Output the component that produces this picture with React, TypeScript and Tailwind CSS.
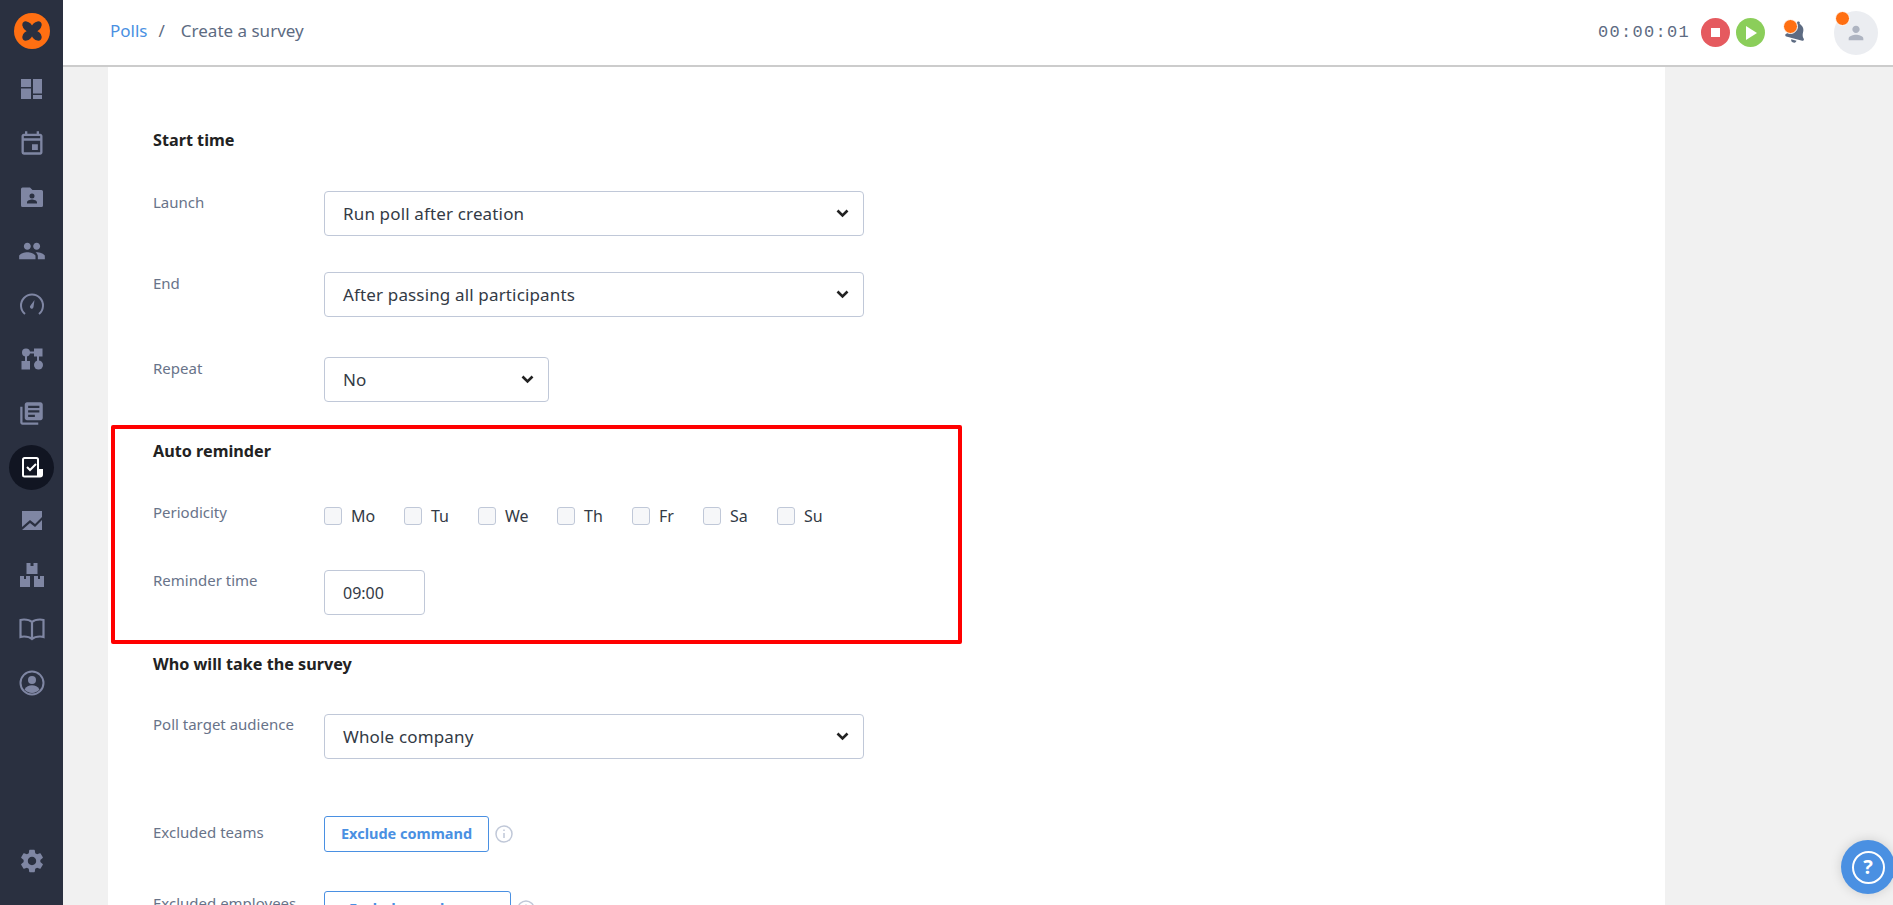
import { MdOutlineEvent, MdPeople, MdLibraryBooks, MdSettings, MdPerson } from 'react-icons/md';
import { FaBell } from 'react-icons/fa';
import type { ReactNode } from 'react';

function DashIcon() {
  return (
    <svg width="24" height="24" viewBox="0 0 24 24" fill="currentColor">
      <path d="M1 2h10v8H1zM1 11.500h10V22H1zM13 2h9v14.500h-9zM13 18h9v4h-9z" />
    </svg>
  );
}

function FolderIcon() {
  return (
    <svg width="24" height="24" viewBox="0 0 24 24" fill="currentColor">
      <path fillRule="evenodd" d="M1 4a1.500 1.500 0 0 1 1.500-1.500H10l2.500 2.500h9A1.500 1.500 0 0 1 23 6.500v14a1.500 1.500 0 0 1-1.500 1.500h-19A1.500 1.500 0 0 1 1 20.500zM12 8.500a2.500 2.500 0 1 0 0 5 2.500 2.500 0 0 0 0-5zM7 18.500h10v-1.200c0-1.800-3.300-2.800-5-2.800s-5 1-5 2.800z" />
    </svg>
  );
}

function GaugeIcon() {
  return (
    <svg width="26" height="26" viewBox="0 0 26 26" fill="none" stroke="currentColor" strokeWidth="2">
      <path d="M6 22a11 11 0 1 1 14 0" />
      <path d="M15.500 8l-4 5.500a1.800 1.800 0 1 0 3 1.500z" fill="currentColor" stroke="none" />
    </svg>
  );
}

function FlowIcon() {
  return (
    <svg width="24" height="24" viewBox="0 0 24 24" fill="currentColor">
      <circle cx="6" cy="5.500" r="4" />
      <rect x="14" y="1.500" width="8.500" height="8" />
      <path d="M9 4.500h6v2H9zM5 9h2v6H5zM17 9h2v6h-2z" />
      <rect x="1.500" y="14" width="8.500" height="8.500" />
      <circle cx="18.500" cy="18" r="4.500" />
    </svg>
  );
}

function PollIcon() {
  return (
    <svg width="24" height="24" viewBox="0 0 24 24" fill="none">
      <path d="M3 4.500A1.500 1.500 0 0 1 4.500 3h12A1.500 1.500 0 0 1 18 4.500V15h4v4.500a2 2 0 0 1-2 2H4.500A1.500 1.500 0 0 1 3 20z" stroke="white" strokeWidth="2" />
      <path d="M17 14h5.500v5.500a2 2 0 0 1-2 2H17z" fill="white" />
      <path d="M7 12l3 3 6-6" stroke="white" strokeWidth="2" />
    </svg>
  );
}

function ChartIcon() {
  return (
    <svg width="24" height="24" viewBox="0 0 24 24" fill="currentColor">
      <path d="M2 2h20v6l-7 7-5-4-8 7zM2 21l8-7 5 4 7-7v10H2z" />
    </svg>
  );
}

function BoxesIcon() {
  return (
    <svg width="26" height="26" viewBox="0 0 26 26" fill="currentColor">
      <path d="M7.500 1h4v3h3V1h4v11h-11zM1 14h4v3h2v-3h4v11H1zM15 14h4v3h2v-3h4v11H15z" />
    </svg>
  );
}

function BookIcon() {
  return (
    <svg width="28" height="28" viewBox="0 0 28 28" fill="none" stroke="currentColor" strokeWidth="2.200">
      <path d="M14 7c-2-1.800-5-2.500-8-2.500-1.200 0-2.300.1-3.500.5v17c1.200-.4 2.300-.5 3.500-.5 3 0 6 .7 8 2.500 2-1.800 5-2.500 8-2.500 1.200 0 2.300.1 3.500.5V5c-1.200-.4-2.300-.5-3.500-.5-3 0-6 .7-8 2.500zM14 7v16" />
    </svg>
  );
}

function AccountIcon() {
  return (
    <svg width="26" height="26" viewBox="0 0 26 26" fill="currentColor">
      <circle cx="13" cy="13" r="11.500" fill="none" stroke="currentColor" strokeWidth="2" />
      <circle cx="13" cy="10" r="4" />
      <path d="M5.500 19.500c1.500-3 4.500-4.200 7.500-4.200s6 1.200 7.500 4.200a10 10 0 0 1-15 0z" />
    </svg>
  );
}

function Chevron() {
  return (
    <svg width="13" height="9" viewBox="0 0 12 9" fill="none" stroke="#222222" strokeWidth="2.600">
      <path d="M1 1.500l5 5 5-5" />
    </svg>
  );
}

function Logo() {
  return (
    <div className="w-9 h-9 rounded-full bg-[#ff6f12] flex items-center justify-center">
      <svg width="20" height="20" viewBox="0 0 20 20" fill="#2a3040">
        <ellipse cx="5.500" cy="5.500" rx="6" ry="4.200" transform="rotate(45 5.500 5.500)" />
        <ellipse cx="14.500" cy="5.500" rx="6" ry="4.200" transform="rotate(-45 14.500 5.500)" />
        <ellipse cx="5.500" cy="14.500" rx="6" ry="4.200" transform="rotate(-45 5.500 14.500)" />
        <ellipse cx="14.500" cy="14.500" rx="6" ry="4.200" transform="rotate(45 14.500 14.500)" />
        <circle cx="10" cy="10" r="4" />
      </svg>
    </div>
  );
}

function NavItem({ children, active }: { children: ReactNode; active?: boolean }) {
  return (
    <div className={active ? 'h-[54px] w-full flex items-center justify-center' : 'h-[54px] w-full flex items-center justify-center text-[#7f86a3]'}>
      {active ? (
        <div className="w-[45px] h-[45px] rounded-full bg-[#111522] flex items-center justify-center">{children}</div>
      ) : (
        children
      )}
    </div>
  );
}

function Sidebar() {
  return (
    <aside className="w-[63px] h-full shrink-0 bg-[#2a3040] flex flex-col items-center">
      <div className="h-[62px] flex items-center justify-center">
        <Logo />
      </div>
      <NavItem><DashIcon /></NavItem>
      <NavItem><MdOutlineEvent size={28} /></NavItem>
      <NavItem><FolderIcon /></NavItem>
      <NavItem><MdPeople size={28} /></NavItem>
      <NavItem><GaugeIcon /></NavItem>
      <NavItem><FlowIcon /></NavItem>
      <NavItem><MdLibraryBooks size={27} /></NavItem>
      <NavItem active><PollIcon /></NavItem>
      <NavItem><ChartIcon /></NavItem>
      <NavItem><BoxesIcon /></NavItem>
      <NavItem><BookIcon /></NavItem>
      <NavItem><AccountIcon /></NavItem>
      <div className="mt-auto mb-[30px] text-[#7f86a3]">
        <MdSettings size={28} />
      </div>
    </aside>
  );
}

function Header() {
  return (
    <header className="h-[67px] shrink-0 bg-white border-b-2 border-[#cccccc] flex items-center justify-between pl-[47px] pr-[15px]">
      <div className="flex items-center text-[17px] -mt-[3px]">
        <span className="text-[#4a90e2]">Polls</span>
        <span className="text-[#5d6b82] ml-[11px]">/</span>
        <span className="text-[#5d6b82] ml-[16px]">Create a survey</span>
      </div>
      <div className="flex items-center">
        <span className="text-[17px] tracking-[1.3px] text-[#5d6b82] font-['Liberation_Mono',monospace]">00:00:01</span>
        <div className="ml-[11px] w-[29px] h-[29px] rounded-full bg-[#e55a5f] flex items-center justify-center">
          <div className="w-[9px] h-[9px] bg-white" />
        </div>
        <div className="ml-[6px] w-[29px] h-[29px] rounded-full bg-[#8bce5a] flex items-center justify-center">
          <svg width="12" height="14" viewBox="0 0 12 14" fill="white"><path d="M1 0l11 7-11 7z" /></svg>
        </div>
        <div className="relative ml-[20px] w-[24px] h-[24px] text-[#5d6b82]">
          <FaBell size={22} className="rotate-[15deg]" />
          <div className="absolute left-[-2px] top-[-2px] w-[15px] h-[15px] rounded-full bg-[#ff6f12] border border-white" />
        </div>
        <div className="relative ml-[25px] w-[44px] h-[44px] rounded-full bg-[#ebedf1] flex items-center justify-center text-[#aeb4c1]">
          <MdPerson size={22} />
          <div className="absolute left-[1px] top-[0px] w-[15px] h-[15px] rounded-full bg-[#ff6f12] border border-white" />
        </div>
      </div>
    </header>
  );
}

function Select({ value, small }: { value: string; small?: boolean }) {
  return (
    <div className={small ? 'w-[225px] h-[45px] border border-[#c0c8d8] rounded-[4px] flex items-center justify-between pl-[18px] pr-[14px]' : 'w-[540px] h-[45px] border border-[#c0c8d8] rounded-[4px] flex items-center justify-between pl-[18px] pr-[14px]'}>
      <span className="text-[17px] tracking-[0.15px] text-[#333a45]">{value}</span>
      <Chevron />
    </div>
  );
}

function Row({ label, children, className, labelClass }: { label: string; children: ReactNode; className: string; labelClass?: string }) {
  return (
    <div className={`flex items-start ${className}`}>
      <span className={`w-[171px] shrink-0 text-[15px] leading-[20px] text-[#687389] ${labelClass ?? 'pt-[1px]'}`}>{label}</span>
      {children}
    </div>
  );
}

function Day({ name, className }: { name: string; className: string }) {
  return (
    <label className={`flex items-center ${className}`}>
      <span className="w-[18px] h-[18px] rounded-[3px] border border-[#c0c8d8] bg-[#f6f7f9]" />
      <span className="ml-[9px] text-[16px] leading-[20px] text-[#333a45]">{name}</span>
    </label>
  );
}

function InfoIcon() {
  return (
    <svg className="ml-[6px]" width="18" height="18" viewBox="0 0 18 18" fill="none" stroke="#c0c8d8" strokeWidth="1.500">
      <circle cx="9" cy="9" r="8" />
      <path d="M9 8v5M9 4.500v1.500" />
    </svg>
  );
}

function Form() {
  return (
    <div className="w-[1557px] ml-[45px] h-full bg-white pl-[45px] overflow-hidden">
      <h3 className="mt-[62px] text-[16.2px] leading-[22px] font-bold text-[#222222]">Start time</h3>
      <Row label="Launch" className="mt-[40px]"><Select value="Run poll after creation" /></Row>
      <Row label="End" className="mt-[36px]"><Select value="After passing all participants" /></Row>
      <Row label="Repeat" className="mt-[40px]"><Select value="No" small /></Row>
      <h3 className="mt-[38px] text-[16.2px] leading-[22px] font-bold text-[#222222]">Auto reminder</h3>
      <div className="flex items-start mt-[40px]">
        <span className="w-[171px] shrink-0 text-[15px] leading-[20px] text-[#687389]">Periodicity</span>
        <div className="flex mt-[4px]">
          <Day name="Mo" className="w-[80px]" />
          <Day name="Tu" className="w-[74px]" />
          <Day name="We" className="w-[79px]" />
          <Day name="Th" className="w-[75px]" />
          <Day name="Fr" className="w-[71px]" />
          <Day name="Sa" className="w-[74px]" />
          <Day name="Su" className="w-[50px]" />
        </div>
      </div>
      <Row label="Reminder time" labelClass="pt-[0px]" className="mt-[44px]">
        <div className="w-[101px] h-[45px] border border-[#c0c8d8] rounded-[4px] flex items-center pl-[18px] text-[16px] text-[#333a45]">09:00</div>
      </Row>
      <h3 className="mt-[38px] text-[16.2px] leading-[22px] font-bold text-[#222222]">Who will take the survey</h3>
      <Row label="Poll target audience" labelClass="pt-[0px]" className="mt-[39px]"><Select value="Whole company" /></Row>
      <Row label="Excluded teams" labelClass="pt-[6px]" className="mt-[57px]">
        <div className="flex items-center">
          <button className="h-[36px] w-[165px] border border-[#4a90e2] rounded-[3px] text-[14.5px] font-bold text-[#4a90e2]">Exclude command</button>
          <InfoIcon />
        </div>
      </Row>
      <Row label="Excluded employees" labelClass="pt-[2px]" className="mt-[39px]">
        <div className="flex items-center">
          <button className="h-[36px] w-[187px] border border-[#4a90e2] rounded-[3px] text-[14.5px] font-bold text-[#4a90e2]">Exclude employees</button>
          <InfoIcon />
        </div>
      </Row>
    </div>
  );
}

export default function App() {
  return (
    <div className="relative w-[1893px] h-[905px] overflow-hidden flex bg-[#f1f1f1] font-['Noto_Sans',sans-serif]">
      <Sidebar />
      <div className="flex-1 min-w-0 flex flex-col">
        <Header />
        <div className="flex-1 min-h-0"><Form /></div>
      </div>
      {/* red highlight drawn over the form */}
      <div className="absolute left-[111px] top-[425px] w-[851px] h-[219px] border-[4px] border-[#ff0000] rounded-[2px] pointer-events-none" />
      <div className="absolute left-[1841px] top-[840px] w-[54px] h-[54px] rounded-full bg-[#4a90e2] shadow-[0_0_12px_rgba(0,0,0,0.15)] flex items-center justify-center">
        <div className="w-[33px] h-[33px] rounded-full border-2 border-white flex items-center justify-center text-white text-[20px] font-bold leading-none">?</div>
      </div>
    </div>
  );
}
